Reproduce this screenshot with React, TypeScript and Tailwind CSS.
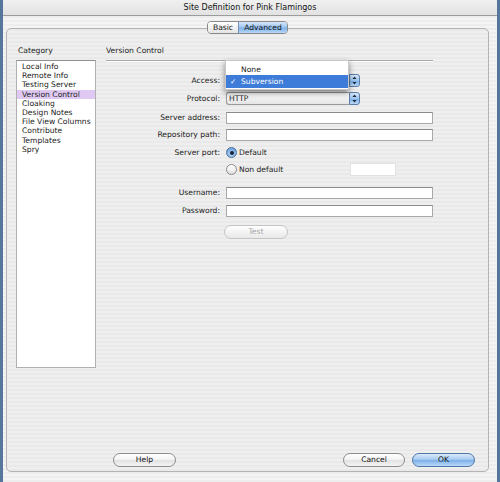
import React from "react";

const font = { fontFamily: '"DejaVu Sans", Verdana, sans-serif' };

const categories = [
  "Local Info",
  "Remote Info",
  "Testing Server",
  "Version Control",
  "Cloaking",
  "Design Notes",
  "File View Columns",
  "Contribute",
  "Templates",
  "Spry",
];

const Label: React.FC<{ children: React.ReactNode }> = ({ children }) => (
  <div className="w-[115px] shrink-0 pr-[1px] text-right text-[7.6px] leading-[10px] text-[#222]">
    {children}
  </div>
);

const TextField: React.FC<{ className?: string }> = ({ className = "" }) => (
  <div
    className={`h-[12px] bg-white border border-[#a9a9a9] border-t-[#8a8a8a] ${className}`}
  />
);

const Stepper: React.FC = () => (
  <div className="w-[11px] h-full rounded-r-[3px] border border-[#5b7ea8] bg-[linear-gradient(180deg,#d8e8f9_0%,#9cc4ee_50%,#7eb0e8_55%,#b9d8f7_100%)] flex items-center justify-center">
    <svg width="5" height="9" viewBox="0 0 5 9">
      <path d="M2.5 0.5 L4.5 3 L0.5 3 Z" fill="#1b2a3a" />
      <path d="M2.5 8.5 L4.5 6 L0.5 6 Z" fill="#1b2a3a" />
    </svg>
  </div>
);

const Select: React.FC<{ value?: string; children?: React.ReactNode }> = ({
  value,
  children,
}) => (
  <div className="relative w-[134px] h-[13px] flex">
    <div className="flex-1 h-full bg-[linear-gradient(180deg,#ffffff_0%,#f2f2f2_50%,#e4e4e4_100%)] border border-r-0 border-[#9a9a9a] rounded-l-[3px] pl-[2px] text-[7.6px] leading-[11px] font-medium text-[#222]">
      {value}
    </div>
    <Stepper />
    {children}
  </div>
);

const Radio: React.FC<{ checked?: boolean; label: string }> = ({
  checked,
  label,
}) => (
  <div className="flex items-center gap-[2px]">
    {checked ? (
      <div className="w-[11px] h-[11px] rounded-full border border-[#4d6f9c] bg-[radial-gradient(circle_at_50%_70%,#b7d7f7_0%,#7fb0e6_60%,#5e92cf_100%)] flex items-center justify-center">
        <div className="w-[4px] h-[4px] rounded-full bg-[#17253a]" />
      </div>
    ) : (
      <div className="w-[11px] h-[11px] rounded-full border border-[#8a8a8a] bg-[linear-gradient(180deg,#ffffff_0%,#efefef_60%,#dcdcdc_100%)]" />
    )}
    <span className="text-[7.6px] leading-[10px] text-[#222]">{label}</span>
  </div>
);

const AquaButton: React.FC<{
  label: string;
  primary?: boolean;
  disabled?: boolean;
  className?: string;
}> = ({ label, primary, disabled, className = "" }) => (
  <div
    className={`h-[14px] rounded-full border flex items-center justify-center text-[7.6px] leading-[10px] ${
      primary
        ? "border-[#4f76a6] bg-[linear-gradient(180deg,#dbeafb_0%,#a7cbf2_45%,#7db0e9_55%,#bcdaf8_100%)] text-[#111]"
        : disabled
        ? "border-[#c4c4c4] bg-[linear-gradient(180deg,#ffffff_0%,#f3f3f3_50%,#e9e9e9_100%)] text-[#a8a8a8]"
        : "border-[#8c8c8c] bg-[linear-gradient(180deg,#ffffff_0%,#f4f4f4_45%,#e2e2e2_55%,#f5f5f5_100%)] text-[#111]"
    } ${className}`}
  >
    {label}
  </div>
);

export default function App() {
  return (
    <div
      style={font}
      className="w-[500px] h-[482px] flex flex-col border-l-[3px] border-r-[3px] border-[#56779b] bg-[repeating-linear-gradient(180deg,#ededed_0px,#ededed_2px,#f4f4f4_2px,#f4f4f4_4px)] overflow-hidden"
    >
      {/* title bar */}
      <div className="h-[16px] shrink-0 border-b border-[#9c9c9c] bg-[linear-gradient(180deg,#f0f0f0_0%,#e2e2e2_100%)] flex items-center justify-center text-[8px] leading-[10px] text-[#111]">
        Site Definition for Pink Flamingos
      </div>

      <div className="flex-1 flex flex-col pl-[3px] pr-[8px] pt-[12px] pb-[10px]">
        <div className="flex-1 flex flex-col border border-[#b3b3b3] rounded-[5px] bg-[repeating-linear-gradient(180deg,#e9e9e9_0px,#e9e9e9_2px,#efefef_2px,#efefef_4px)]">
          {/* tabs */}
          <div className="self-center -mt-[8px] h-[13px] flex rounded-[4px] border border-[#8a8a8a] overflow-hidden text-[7.6px] leading-[11px]">
            <div className="w-[30px] text-center bg-[linear-gradient(180deg,#ffffff_0%,#f2f2f2_50%,#e3e3e3_100%)] text-[#111]">
              Basic
            </div>
            <div className="w-[49px] text-center border-l border-[#7290b6] bg-[linear-gradient(180deg,#d6e7fa_0%,#a3c8f1_45%,#7fb1e9_55%,#b7d7f7_100%)] text-[#111]">
              Advanced
            </div>
          </div>

          <div className="flex mt-[12px] pl-[9px]">
            {/* category column */}
            <div className="w-[80px] shrink-0 flex flex-col">
              <div className="pl-[2px] text-[7.6px] leading-[10px] text-[#222]">
                Category
              </div>
              <div className="mt-[4px] h-[308px] bg-white border border-[#b0b0b0] border-t-[#8f8f8f] pt-[1px]">
                {categories.map((c) => (
                  <div
                    key={c}
                    className={`h-[9.2px] pl-[5px] text-[7.6px] leading-[9.2px] text-[#222] whitespace-nowrap ${
                      c === "Version Control" ? "bg-[#dfc9f2]" : ""
                    }`}
                  >
                    {c}
                  </div>
                ))}
              </div>
            </div>

            {/* version control panel */}
            <div className="ml-[10px] w-[327px] flex flex-col">
              <div className="text-[7.6px] leading-[10px] text-[#222]">
                Version Control
              </div>
              <div className="mt-[4px] border-t border-[#a8a8a8] border-b border-b-white" />

              <div className="mt-[12px] h-[13px] flex items-center">
                <Label>Access:</Label>
                <div className="ml-[5px]">
                  <Select>
                    {/* open popup menu */}
                    <div className="absolute -left-[1px] -top-[14px] w-[124px] h-[30px] bg-white border border-[#c8c8c8] shadow-[0_3px_6px_rgba(0,0,0,0.45)] flex flex-col pt-[3px] z-10">
                      <div className="h-[11px] pl-[15px] text-[7.6px] leading-[11px] text-[#222]">
                        None
                      </div>
                      <div className="h-[13px] flex items-center bg-[#3e7cd9] text-white text-[7.6px] leading-[13px]">
                        <span className="w-[15px] pl-[4px]">✓</span>
                        <span>Subversion</span>
                      </div>
                    </div>
                  </Select>
                </div>
              </div>

              <div className="mt-[5px] h-[13px] flex items-center">
                <Label>Protocol:</Label>
                <div className="ml-[5px]">
                  <Select value="HTTP" />
                </div>
              </div>

              <div className="mt-[7px] h-[12px] flex items-center">
                <Label>Server address:</Label>
                <TextField className="ml-[5px] flex-1" />
              </div>

              <div className="mt-[5px] h-[12px] flex items-center">
                <Label>Repository path:</Label>
                <TextField className="ml-[5px] flex-1" />
              </div>

              <div className="mt-[6px] h-[11px] flex items-center">
                <Label>Server port:</Label>
                <div className="ml-[5px]">
                  <Radio checked label="Default" />
                </div>
              </div>

              <div className="mt-[5px] h-[13px] flex items-center">
                <div className="w-[115px] shrink-0" />
                <div className="ml-[5px] w-[124px]">
                  <Radio label="Non default" />
                </div>
                <div className="w-[46px] h-[13px] bg-white border border-[#e2e2e2]" />
              </div>

              <div className="mt-[11px] h-[12px] flex items-center">
                <Label>Username:</Label>
                <TextField className="ml-[5px] flex-1" />
              </div>

              <div className="mt-[6px] h-[12px] flex items-center">
                <Label>Password:</Label>
                <TextField className="ml-[5px] flex-1" />
              </div>

              <div className="mt-[8px] flex">
                <div className="w-[118px] shrink-0" />
                <AquaButton label="Test" disabled className="w-[64px] h-[13px]" />
              </div>
            </div>
          </div>

          {/* bottom buttons */}
          <div className="mt-auto mb-[4px] flex items-center pl-[106px] pr-[13px]">
            <AquaButton label="Help" className="w-[63px]" />
            <div className="flex-1" />
            <AquaButton label="Cancel" className="w-[62px]" />
            <AquaButton label="OK" primary className="ml-[7px] w-[63px]" />
          </div>
        </div>
      </div>
    </div>
  );
}
